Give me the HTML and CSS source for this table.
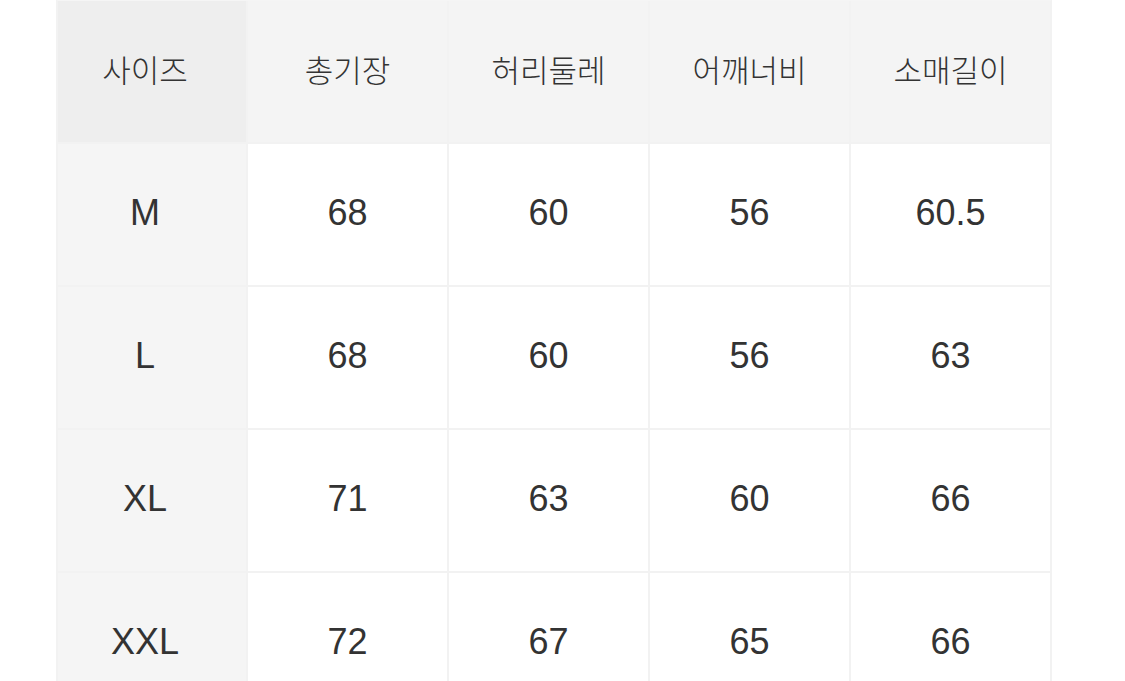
FILE: index.html
```html
<!DOCTYPE html>
<html lang="ko">
<head>
<meta charset="utf-8">
<title>사이즈표</title>
<link rel="stylesheet" href="styles.css">
</head>
<body>
<div class="table">
  <div class="cell head first ko">사이즈</div>
  <div class="cell head ko">총기장</div>
  <div class="cell head ko">허리둘레</div>
  <div class="cell head ko">어깨너비</div>
  <div class="cell head ko">소매길이</div>

  <div class="cell first">M</div>
  <div class="cell">68</div>
  <div class="cell">60</div>
  <div class="cell">56</div>
  <div class="cell">60.5</div>

  <div class="cell first">L</div>
  <div class="cell">68</div>
  <div class="cell">60</div>
  <div class="cell">56</div>
  <div class="cell">63</div>

  <div class="cell first">XL</div>
  <div class="cell">71</div>
  <div class="cell">63</div>
  <div class="cell">60</div>
  <div class="cell">66</div>

  <div class="cell first">XXL</div>
  <div class="cell">72</div>
  <div class="cell">67</div>
  <div class="cell">65</div>
  <div class="cell">66</div>
</div>
</body>
</html>
```

FILE: styles.css
```css
html, body {
  margin: 0;
  padding: 0;
  background: #ffffff;
}
body {
  padding-left: 56px;
  overflow: hidden;
}
.table {
  display: grid;
  grid-template-columns: 188px repeat(4, 199px);
  grid-auto-rows: 141px;
  gap: 2px;
  width: max-content;
  background: #f2f2f2;
  border-left: 2px solid #f2f2f2;
  border-right: 2px solid #f2f2f2;
  border-top: 1px solid #f5f5f5;
}
.cell {
  display: flex;
  align-items: center;
  justify-content: center;
  background: #ffffff;
  color: #333333;
  font-family: "Liberation Sans", "Noto Sans CJK KR", sans-serif;
  font-size: 36px;
  padding-bottom: 4px;
}
.cell.first {
  background: #f5f5f5;
  padding-right: 14px;
}
.cell.head {
  background: #f4f4f4;
}
.cell.head.first {
  background: #eeeeee;
}
.ko {
  font-family: "Noto Sans CJK KR", sans-serif;
  font-weight: 300;
  font-size: 31px;
  padding-bottom: 6px;
}
```
